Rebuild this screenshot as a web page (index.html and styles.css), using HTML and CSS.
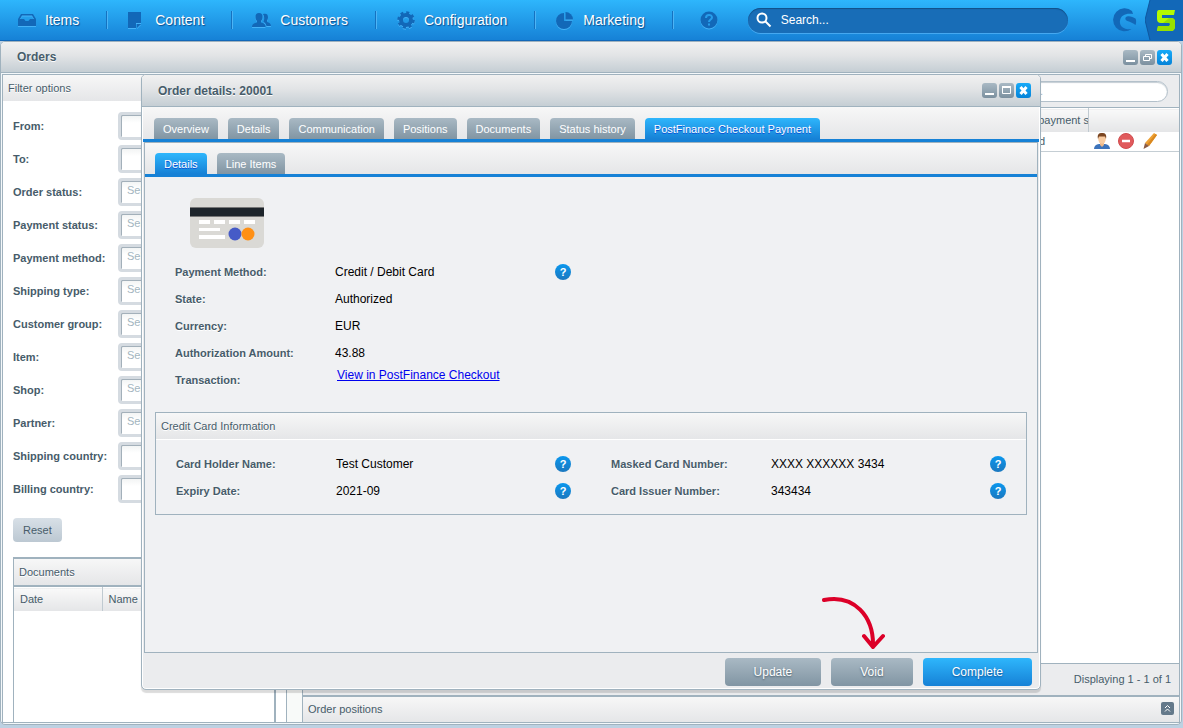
FILE: index.html
```html
<!DOCTYPE html>
<html lang="en">
<head>
    <meta charset="UTF-8">
    <meta name="viewport" content="width=device-width, initial-scale=1.0">
    <title>Orders</title>
    <link rel="stylesheet" href="styles.css">
</head>
<body>
    <header class="topbar">
        <nav class="menu">
            <a href="#" class="menu-item">
                <svg class="menu-icon" viewBox="0 0 20 20"><path d="M4 4h12l3 5v7H1V9zM5 5.500L3 9h4l1.500 2h3L13 9h4l-2-3.500z" fill-rule="evenodd"/></svg>
                Items
            </a>
            <a href="#" class="menu-item">
                <svg class="menu-icon" viewBox="0 0 20 20"><path d="M1 2h13v11H9v5H1z"/><path d="M10 14h4l-4 4z"/></svg>
                Content
            </a>
            <a href="#" class="menu-item">
                <svg class="menu-icon" viewBox="0 0 20 20"><path d="M7 3c2.500 0 3.500 1.500 3.500 4S9.500 10.500 9 11v1.500c2 .5 4.500 1.300 4.500 4.500H0c0-3.200 3-4 5-4.500V11c-.5-.5-1.500-1.500-1.500-4S4.500 3 7 3z"/><path d="M11 4c3-1 5 0 5 3 0 2-.5 3-1 3.500V12c2 .5 4 1.500 4 4h-4.500c-.5-2.500-2-3.500-3-4 1-3 1-5-.5-8z"/></svg>
                Customers
            </a>
            <a href="#" class="menu-item">
                <svg class="menu-icon" viewBox="0 0 20 20"><circle cx="10" cy="10" r="5" fill="none" stroke="#1268b8" stroke-width="4"/><circle cx="10" cy="10" r="7.500" fill="none" stroke="#1268b8" stroke-width="2.500" stroke-dasharray="3 2.890"/></svg>
                Configuration
            </a>
            <a href="#" class="menu-item">
                <svg class="menu-icon" viewBox="0 0 20 20"><path d="M9 3v8h8a8 8 0 1 1-8-8z"/><path d="M10.500 2a7.500 7.500 0 0 1 7.500 7.500h-7.500z"/></svg>
                Marketing
            </a>
            <a href="#" class="menu-item menu-help" aria-label="Help">
                <svg class="menu-icon" viewBox="0 0 20 20"><circle cx="10" cy="10" r="8.500"/><path d="M7 8c0-4 6-4 6-.5 0 2-3 2-3 4.500M10 13.500v2" fill="none" stroke="#279eeb" stroke-width="2"/></svg>
            </a>
        </nav>
        <label class="search">
            <svg class="search-icon" viewBox="0 0 16 16"><circle cx="6" cy="6" r="4.500"/><path d="M9.500 9.500l5 5"/></svg>
            <input type="text" class="search-input" placeholder="Search..." aria-label="Search">
        </label>
        <svg class="brand" viewBox="0 0 24 24"><path d="M19 3A11.500 11.500 0 1 0 18.500 21C11 22 6 18 7 12.500 8 7 13 5 20 6z"/><path d="M22.500 17c.8-2 .9-4 .2-6.300-2.500-1.700-6-2.700-8.500-2.200-2.500.6-2.400 3.500.2 4.600 3 1.200 5.800 2 8.100 3.900z"/></svg>
        <svg class="badge5" viewBox="0 0 38 40">
            <path d="M5 0h33v40H5L0 20z" fill="#1268b8"/>
            <path d="M5 0L0 20l5 20" fill="none" stroke="#0f579f"/>
            <path d="M14 10h16l-1 5H17v3h9q4 0 4 4v4q0 5-4 5H12l1-5h11q1 0 1-2 0-1-1-1h-8q-4 0-4-4v-6q0-3 2-3z" fill="#b4fa00"/>
            <path d="M24 18h2q4 0 4 4v4q0 5-4 5H12l1-5h11q1 0 1-2 0-1-1-1h-6z" fill="#96e000"/>
        </svg>
    </header>

    <main class="desktop">
        <section class="window orders">
            <div class="window-head">
                <h1 class="window-title">Orders</h1>
                <button class="tool" aria-label="Minimize"><svg viewBox="0 0 15 15"><path d="M3 11h9"/></svg></button>
                <button class="tool" aria-label="Restore"><svg viewBox="0 0 15 15"><path d="M5.500 6.500v-2h6v4h-2M3.500 6.500h6v4h-6z" class="thin"/></svg></button>
                <button class="tool tool-close" aria-label="Close"><svg viewBox="0 0 15 15"><path d="M4.500 4l6 7M10.500 4l-6 7"/></svg></button>
            </div>
            <div class="orders-body">
                <aside class="sidebar">
                    <h2 class="panel-head">Filter options</h2>
                    <form class="filters">
                        <div class="filter"><label for="from">From:</label><input type="text" id="from"></div>
                        <div class="filter"><label for="to">To:</label><input type="text" id="to"></div>
                        <div class="filter"><label for="orderStatus">Order status:</label><select id="orderStatus"><option>Select...</option></select></div>
                        <div class="filter"><label for="paymentStatus">Payment status:</label><select id="paymentStatus"><option>Select...</option></select></div>
                        <div class="filter"><label for="paymentMethod">Payment method:</label><select id="paymentMethod"><option>Select...</option></select></div>
                        <div class="filter"><label for="shippingType">Shipping type:</label><select id="shippingType"><option>Select...</option></select></div>
                        <div class="filter"><label for="customerGroup">Customer group:</label><select id="customerGroup"><option>Select...</option></select></div>
                        <div class="filter"><label for="item">Item:</label><select id="item"><option>Select...</option></select></div>
                        <div class="filter"><label for="shop">Shop:</label><select id="shop"><option>Select...</option></select></div>
                        <div class="filter"><label for="partner">Partner:</label><select id="partner"><option>Select...</option></select></div>
                        <div class="filter"><label for="shippingCountry">Shipping country:</label><select id="shippingCountry"></select></div>
                        <div class="filter"><label for="billingCountry">Billing country:</label><select id="billingCountry"></select></div>
                        <button type="reset" class="reset">Reset</button>
                    </form>
                    <div class="documents">
                        <h2 class="panel-head">Documents</h2>
                        <table class="grid">
                            <thead><tr><th class="col-date">Date</th><th>Name</th></tr></thead>
                        </table>
                    </div>
                </aside>
                <div class="splitter"></div>
                <div class="list">
                    <div class="list-bar">
                        <input type="text" class="list-search" placeholder="Search..." aria-label="Search orders">
                    </div>
                    <div class="list-rows">
                        <table class="grid">
                            <thead>
                                <tr><th></th><th class="col-status">Current payment status</th><th class="col-actions"></th></tr>
                            </thead>
                            <tbody>
                                <tr>
                                    <td></td>
                                    <td>Reserved</td>
                                    <td>
                                        <div class="actions">
                                            <button class="action" aria-label="Customer"><svg viewBox="0 0 16 16"><path d="M0 16c0-3 2-4.500 5-5h6c3 .5 5 2 5 5z" fill="#3c73bb"/><path d="M6 9h4v3l-2 2-2-2z" fill="#eab688"/><ellipse cx="8" cy="6" rx="3.800" ry="4.800" fill="#f8cba0"/><path d="M4 6C3 1 5 0 8 0s5 1 4 6l-1-2.500H5z" fill="#7a4520"/></svg></button>
                                            <button class="action" aria-label="Delete"><svg viewBox="0 0 16 16"><circle cx="8" cy="8" r="7.500" fill="#e05a5c" stroke="#d04c4e"/><path d="M4 8h8" stroke="#fff" stroke-width="2.500"/></svg></button>
                                            <button class="action" aria-label="Edit"><svg viewBox="0 0 16 16"><path d="M3 10L12 0l3 2-8 11z" fill="#eda033"/><path d="M5 11.500L13.500 1 15 2 7 13z" fill="#d98820"/><path d="M3 10l4 3-5.500 3z" fill="#8a5a44"/></svg></button>
                                        </div>
                                    </td>
                                </tr>
                            </tbody>
                        </table>
                    </div>
                    <div class="paging">Displaying 1 - 1 of 1</div>
                    <div class="positions">
                        <h2>Order positions</h2>
                        <button class="expand" aria-label="Expand"><svg viewBox="0 0 13 13"><path d="M4 6l2.500-2.500L9 6M4 9.500L6.500 7 9 9.500"/></svg></button>
                    </div>
                </div>
            </div>
        </section>

        <section class="window details">
            <div class="window-head">
                <h1 class="window-title">Order details: 20001</h1>
                <button class="tool" aria-label="Minimize"><svg viewBox="0 0 15 15"><path d="M3 11h9"/></svg></button>
                <button class="tool" aria-label="Maximize"><svg viewBox="0 0 15 15"><path d="M3.500 4.500h8v6h-8z" class="thin"/><path d="M3 4h9"/></svg></button>
                <button class="tool tool-close" aria-label="Close"><svg viewBox="0 0 15 15"><path d="M4.500 4l6 7M10.500 4l-6 7"/></svg></button>
            </div>
            <div class="tabs">
                <button class="tab">Overview</button>
                <button class="tab">Details</button>
                <button class="tab">Communication</button>
                <button class="tab">Positions</button>
                <button class="tab">Documents</button>
                <button class="tab">Status history</button>
                <button class="tab active">PostFinance Checkout Payment</button>
            </div>
            <div class="inner">
                <div class="tabs">
                    <button class="tab active">Details</button>
                    <button class="tab">Line Items</button>
                </div>
                <div class="content">
                    <svg class="card" viewBox="0 0 74 50">
                        <rect width="74" height="50" rx="6" fill="#dad9d5"/>
                        <path d="M0 9h74v10H0z" fill="#777"/>
                        <path d="M0 10h74v8H0z" fill="#1e252b"/>
                        <path d="M9 22h11v4H9zM24 22h11v4H24zM39 22h11v4H39zM54 22h11v4H54zM9 30h21v3H9zM9 37h26v4H9z" fill="#fff"/>
                        <circle cx="45" cy="36" r="6.500" fill="#465bc7"/>
                        <circle cx="58" cy="36" r="6.500" fill="#ff9015"/>
                    </svg>
                    <div class="columns">
                        <div class="rows">
                            <div class="row"><span class="name">Payment Method:</span><span class="value">Credit / Debit Card</span><button class="help" aria-label="Help">?</button></div>
                            <div class="row"><span class="name">State:</span><span class="value">Authorized</span></div>
                            <div class="row"><span class="name">Currency:</span><span class="value">EUR</span></div>
                            <div class="row"><span class="name">Authorization Amount:</span><span class="value">43.88</span></div>
                            <div class="row"><span class="name">Transaction:</span><a href="#" class="link">View in PostFinance Checkout</a></div>
                        </div>
                    </div>
                    <div class="box">
                        <h2 class="panel-head">Credit Card Information</h2>
                        <div class="columns">
                            <div class="rows">
                                <div class="row"><span class="name">Card Holder Name:</span><span class="value">Test Customer</span><button class="help" aria-label="Help">?</button></div>
                                <div class="row"><span class="name">Expiry Date:</span><span class="value">2021-09</span><button class="help" aria-label="Help">?</button></div>
                            </div>
                            <div class="rows">
                                <div class="row"><span class="name">Masked Card Number:</span><span class="value">XXXX XXXXXX 3434</span><button class="help" aria-label="Help">?</button></div>
                                <div class="row"><span class="name">Card Issuer Number:</span><span class="value">343434</span><button class="help" aria-label="Help">?</button></div>
                            </div>
                        </div>
                    </div>
                </div>
            </div>
            <div class="buttons">
                <button class="btn">Update</button>
                <button class="btn">Void</button>
                <button class="btn primary">Complete</button>
            </div>
            <svg class="arrow" viewBox="0 0 66 58"><path d="M4 6C34 0 54 22 53 53M44 42l9 11 10-11"/></svg>
        </section>
    </main>
</body>
</html>
```
FILE: styles.css
```css
* {
    box-sizing: border-box;
}

body {
    margin: 0;
    height: 100vh;
    display: flex;
    flex-direction: column;
    overflow: hidden;
    font-family: "Liberation Sans", Arial, sans-serif;
    font-size: 11px;
    color: #475c6a;
    background: #bdd1e2;
}

h1, h2 {
    margin: 0;
    font-weight: normal;
    font-size: 11px;
}

button, input, select {
    font-family: inherit;
    font-size: 11px;
    border: none;
    padding: 0;
}

svg {
    display: block;
}

/* top bar */
.topbar {
    height: 41px;
    flex: none;
    display: flex;
    align-items: center;
    background: linear-gradient(#2eb6fc, #1681d6);
    border-bottom: 1px solid #1268b8;
}

.menu {
    display: flex;
}

.menu-item {
    display: flex;
    align-items: center;
    gap: 8px;
    height: 18px;
    padding: 0 28px 0 19px;
    border-right: 1px solid #4db4f5;
    box-shadow: inset -1px 0 #1572c0;
    font-size: 14px;
    color: #fff;
    text-decoration: none;
    text-shadow: 1px 1px 1px #0d4f8f;
}

.menu-item:first-child {
    padding-left: 17px;
}

.menu-help {
    padding: 0 29px 0 25px;
    border: none;
    box-shadow: none;
}

.menu-icon {
    width: 20px;
    height: 20px;
    fill: #1268b8;
    filter: drop-shadow(0 1px #45b2f7);
}

.search {
    display: flex;
    align-items: center;
    gap: 9px;
    width: 320px;
    height: 25px;
    padding: 0 8px;
    border-radius: 13px;
    background: #186db7;
    box-shadow: inset 0 1px 1px #114f88, 0 1px #45a8f0;
}

.search-icon {
    width: 16px;
    height: 16px;
    flex: none;
    fill: none;
    stroke: #fff;
    stroke-width: 2;
}

.search-input {
    flex: 1;
    background: none;
    color: #fff;
    font-size: 12px;
}

.search-input::placeholder {
    color: #fff;
}

.brand {
    width: 24px;
    height: 24px;
    margin-left: auto;
    margin-right: 8px;
    fill: #1268b8;
}

.badge5 {
    width: 38px;
    height: 40px;
}

/* windows */
.desktop {
    flex: 1;
    position: relative;
}

.window {
    position: absolute;
    display: flex;
    flex-direction: column;
    border: 1px solid #a0b2be;
    border-radius: 5px;
}

.orders {
    top: 0;
    left: 0;
    right: 1px;
    bottom: 3px;
    padding: 0 1px 1px;
    background: #f4f8fa;
}

.details {
    top: 33px;
    left: 141px;
    right: 142px;
    bottom: 38px;
    background: #ebecee;
    box-shadow: inset 0 0 0 1px #fff, 0 3px 1px rgba(0, 0, 0, 0.14);
}

.window-head {
    display: flex;
    align-items: center;
    gap: 2px;
    height: 32px;
    flex: none;
    padding: 0 9px 0 16px;
    border-bottom: 1px solid #a0b2be;
    border-radius: 4px 4px 0 0;
    background: linear-gradient(#f1f1f1, #e2e4e6 45%, #c5ced4);
}

.orders .window-head {
    height: 31px;
    margin: 0 -1px 1px;
}

.window-title {
    flex: 1;
    font-size: 12px;
    font-weight: bold;
    line-height: 14px;
    text-shadow: 0 1px #fff;
}

.tool {
    width: 15px;
    height: 15px;
    border-radius: 3px;
    background: linear-gradient(#a9b9c4, #7b909f);
}

.tool-close {
    background: linear-gradient(#18aaf8, #0583d8);
}

.tool svg {
    fill: none;
    stroke: #fff;
    stroke-width: 2;
}

.tool .thin {
    stroke-width: 1;
}

.tool-close svg {
    stroke-width: 3;
}

.panel-head {
    height: 26px;
    flex: none;
    line-height: 26px;
    padding: 0 5px;
    background: linear-gradient(#f7f7f7, #e5e6e8);
    text-shadow: 0 1px #fff;
}

/* orders */
.orders-body {
    flex: 1;
    min-height: 0;
    display: flex;
    border: 1px solid #a0b2be;
    background: #fff;
}

.sidebar {
    width: 283px;
    display: flex;
    flex-direction: column;
    overflow: hidden;
}

.filters {
    padding: 8px 10px 0;
}

.filter {
    display: flex;
    align-items: center;
    height: 33px;
}

.filter label {
    width: 105px;
    flex: none;
    font-weight: bold;
}

.filter input, .filter select {
    flex: 1;
    min-width: 0;
    height: 28px;
    padding: 0 6px 4px;
    appearance: none;
    border: 3px solid #d5dbe1;
    border-radius: 4px;
    background: linear-gradient(#f1f3f3, #fff 8px);
    box-shadow: inset 1px 1px #a3b0ba;
    color: #a3b5c0;
}

.reset {
    display: block;
    height: 24px;
    margin-top: 13px;
    padding: 0 10px;
    border-radius: 4px;
    background: linear-gradient(#d8e0e7, #bcc8d2);
    color: #475c6a;
}

.documents {
    flex: 1;
    margin: 15px 10px 0;
    border: 2px solid #a0b2be;
    border-width: 2px 2px 0 1px;
}

.documents .panel-head {
    height: 28px;
    border-bottom: 2px solid #a0b2be;
}

.grid {
    width: 100%;
    table-layout: fixed;
    border-collapse: collapse;
}

.grid th {
    height: 23px;
    padding: 0 6px;
    overflow: hidden;
    white-space: nowrap;
    text-align: left;
    font-weight: normal;
    border-right: 1px solid #c0cad1;
    border-top: 1px solid #fff;
    background: linear-gradient(#f9f9f9, #e4e5e7);
}

.grid th:last-child {
    border-right: none;
}

.grid td {
    height: 20px;
    padding: 0 6px;
    border-bottom: 1px solid #c5ced4;
}

.col-date {
    width: 88px;
}

.splitter {
    width: 17px;
    border: 1px solid #a0b2be;
    border-width: 0 1px;
    background: #f8faf9;
}

.list {
    flex: 1;
    display: flex;
    flex-direction: column;
    background: #ebecee;
}

.list-bar {
    display: flex;
    justify-content: flex-end;
    align-items: center;
    height: 33px;
    padding: 0 11px;
    border-bottom: 1px solid #a0b2be;
}

.list-search {
    width: 182px;
    height: 21px;
    padding: 0 12px;
    border: 1px solid #b3c0ca;
    border-radius: 11px;
    background: #fff;
    box-shadow: inset 0 1px 1px #c5ced4;
}

.list-search::placeholder {
    color: #a3b5c0;
}

.list-rows {
    flex: 1;
    background: #fff;
}

.col-status {
    width: 96px;
}

.col-actions {
    width: 91px;
}

.actions {
    display: flex;
    gap: 8px;
}

.action {
    width: 16px;
    height: 16px;
    background: none;
}

.paging {
    height: 32px;
    line-height: 30px;
    padding: 0 8px;
    border-top: 1px solid #a0b2be;
    text-align: right;
}

.positions {
    display: flex;
    align-items: center;
    justify-content: space-between;
    height: 27px;
    padding: 0 5px 2px;
    border-top: 2px solid #a0b2be;
    background: linear-gradient(#f7f7f7, #e5e6e8);
}

.expand {
    width: 13px;
    height: 13px;
    border-radius: 2px;
    background: #64798a;
}

.expand svg {
    fill: none;
    stroke: #fff;
}

/* order details */
.tabs {
    display: flex;
    align-items: flex-end;
    gap: 10px;
    height: 34px;
    flex: none;
    padding: 0 10px;
    border-bottom: 3px solid #1681d6;
    background: linear-gradient(#f7f7f7, #e5e6e8);
}

.details > .tabs {
    height: 35px;
    margin: 0 1px;
    padding: 0 11px;
}

.tab {
    height: 21px;
    padding: 0 9px;
    border-radius: 4px 4px 0 0;
    background: linear-gradient(#a9b9c4, #8195a3);
    color: #fff;
    white-space: nowrap;
}

.tab.active {
    background: linear-gradient(#2eb6fc, #1681d6);
    text-shadow: 0 1px #0a50d8;
}

.inner {
    flex: 1;
    margin: 0 2px;
    border: 1px solid #a0b2be;
    background: #f0f1f3;
}

.content {
    padding: 21px 10px 0;
}

.card {
    width: 74px;
    height: 50px;
    margin: 0 35px 10px;
}

.columns {
    display: grid;
    grid-template-columns: 1fr 1fr;
}

.rows {
    padding: 0 20px;
}

.row {
    display: flex;
    align-items: center;
    height: 27px;
}

.name {
    width: 160px;
    font-weight: bold;
    text-shadow: 0 1px #fff;
}

.value {
    flex: 1;
    font-size: 12px;
    color: #000;
}

.link {
    padding: 0 2px;
    align-self: flex-start;
    font-size: 12px;
    line-height: 18px;
    color: #0000ee;
}

.help {
    width: 16px;
    height: 16px;
    border-radius: 8px;
    background: linear-gradient(#0a97ee, #1b78bf);
    color: #fff;
    font-weight: bold;
    line-height: 16px;
}

.box {
    margin-top: 19px;
    border: 1px solid #a0b2be;
}

.box .panel-head {
    height: 27px;
    border-bottom: 1px solid #fff;
}

.box .columns {
    padding: 10px 0;
}

.buttons {
    display: flex;
    justify-content: flex-end;
    gap: 10px;
    padding: 5px 8px 3px;
}

.btn {
    height: 28px;
    padding: 0 29px;
    border-radius: 4px;
    background: linear-gradient(#a9b9c4, #8195a3);
    color: #fff;
    font-size: 12px;
    text-shadow: 0 1px 2px #475c6a;
}

.btn.primary {
    background: linear-gradient(#2eb6fc, #1681d6);
    text-shadow: 0 1px 2px #0d4f8f;
}

.arrow {
    position: absolute;
    right: 154px;
    bottom: 37px;
    width: 66px;
    height: 58px;
    fill: none;
    stroke: #dc0028;
    stroke-width: 4;
    stroke-linecap: round;
    stroke-linejoin: round;
}
```
